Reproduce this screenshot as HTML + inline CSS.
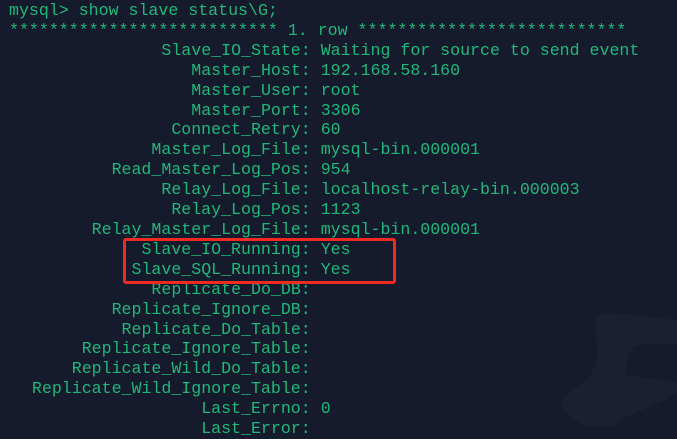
<!DOCTYPE html>
<html><head><meta charset="utf-8"><style>
html,body{margin:0;padding:0;width:677px;height:426px;overflow:hidden;background:#151a2c;}
.t{position:absolute;left:9px;top:1px;font-family:"Liberation Mono","Courier New",monospace;font-size:16.6px;line-height:19.9px;color:#1fb878;white-space:pre;}
.l span{display:inline-block;width:calc(30ch + 3px);text-align:right;}
.box{position:absolute;left:123px;top:238px;width:267px;height:40px;border:3px solid #ee2a22;border-radius:3px;}
svg{position:absolute;left:0;top:0;}
</style></head><body>
<svg width="677" height="426"><path d="M605 313 C635 314 660 318 677 320 L677 345 C660 343 645 344 635 346 C628 352 626 365 626 375 L677 382 L677 394 C655 405 640 410 625 418 L612 426 L585 426 C570 418 560 412 562 402 C565 392 585 386 593 370 C600 355 596 340 595 328 C595 318 598 313 605 313 Z" fill="#1b1f2f"/></svg>
<div class="t"><div>mysql&gt; show slave status\G;</div><div>*************************** 1. row ***************************</div><div class="l"><span>Slave_IO_State:</span> Waiting for source to send event</div><div class="l"><span>Master_Host:</span> 192.168.58.160</div><div class="l"><span>Master_User:</span> root</div><div class="l"><span>Master_Port:</span> 3306</div><div class="l"><span>Connect_Retry:</span> 60</div><div class="l"><span>Master_Log_File:</span> mysql-bin.000001</div><div class="l"><span>Read_Master_Log_Pos:</span> 954</div><div class="l"><span>Relay_Log_File:</span> localhost-relay-bin.000003</div><div class="l"><span>Relay_Log_Pos:</span> 1123</div><div class="l"><span>Relay_Master_Log_File:</span> mysql-bin.000001</div><div class="l"><span>Slave_IO_Running:</span> Yes</div><div class="l"><span>Slave_SQL_Running:</span> Yes</div><div class="l"><span>Replicate_Do_DB:</span></div><div class="l"><span>Replicate_Ignore_DB:</span></div><div class="l"><span>Replicate_Do_Table:</span></div><div class="l"><span>Replicate_Ignore_Table:</span></div><div class="l"><span>Replicate_Wild_Do_Table:</span></div><div class="l"><span>Replicate_Wild_Ignore_Table:</span></div><div class="l"><span>Last_Errno:</span> 0</div><div class="l"><span>Last_Error:</span></div></div>
<div class="box"></div>
</body></html>
